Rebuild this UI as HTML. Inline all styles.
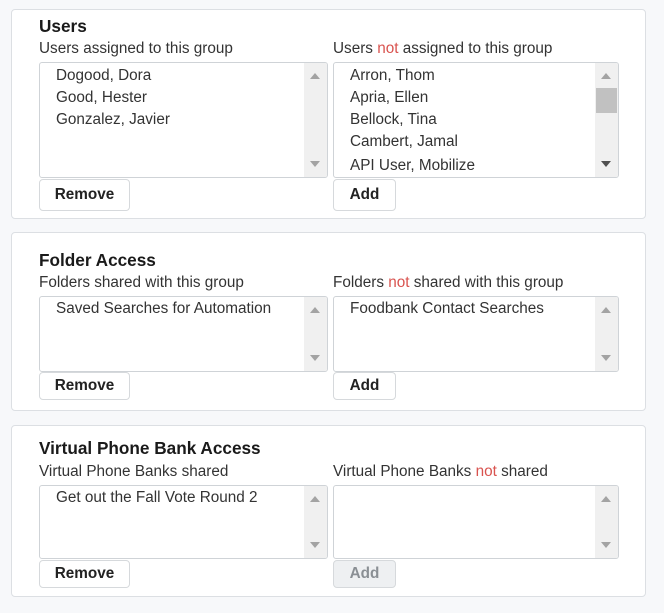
<!DOCTYPE html>
<html><head><style>
body{margin:0;width:664px;height:613px;background:#f7f8fa;font-family:"Liberation Sans",sans-serif;color:#212529;position:relative;overflow:hidden}
.card{position:absolute;left:11px;width:635px;background:#fff;border:1px solid #dcdfe3;border-radius:4px;box-sizing:border-box}
.a{position:absolute;white-space:nowrap}
h3{position:absolute;margin:0;font-size:17.2px;font-weight:bold;left:39px;color:#1a1a1a}
.lbl{position:absolute;font-size:15.3px;color:#333}
.not{color:#d9534f}
.list{position:absolute;border:1px solid #cfd3d7;border-radius:3px;background:#fff;box-sizing:border-box;overflow:hidden}
.list .it{position:absolute;left:16px;font-size:15.3px;color:#333;white-space:nowrap}
.sb{position:absolute;right:0;top:0;bottom:0;width:23px;background:#f0f0f0}
.up,.dn{position:absolute;left:6px;width:0;height:0;border-left:5px solid transparent;border-right:5px solid transparent}
.up{top:10px;border-bottom:6px solid #a3a3a3}
.dn{bottom:10px;border-top:6px solid #a3a3a3}
.btn{position:absolute;border:1px solid #d6d9dc;border-radius:4px;background:#fff;box-sizing:border-box;font-size:15.3px;font-weight:bold;color:#222;text-align:center}
.dis{background:#eef0f2;color:#8a8f94}
</style></head><body>

<div class="card" style="top:9px;height:210px"></div>
<h3 style="top:16px">Users</h3>
<div class="lbl a" style="left:39px;top:40px">Users assigned to this group</div>
<div class="lbl a" style="left:333px;top:40px">Users <span class="not">not</span> assigned to this group</div>
<div class="list" style="left:39px;top:62px;width:289px;height:116px">
<div class="it" style="top:4px">Dogood, Dora</div><div class="it" style="top:26px">Good, Hester</div><div class="it" style="top:48px">Gonzalez, Javier</div>
<div class="sb"><div class="up"></div><div class="dn"></div></div></div>
<div class="list" style="left:333px;top:62px;width:286px;height:116px">
<div class="it" style="top:4px">Arron, Thom</div><div class="it" style="top:26px">Apria, Ellen</div><div class="it" style="top:48px">Bellock, Tina</div><div class="it" style="top:70px">Cambert, Jamal</div><div class="it" style="top:94px">API User, Mobilize</div>
<div class="sb"><div class="up"></div><div style="position:absolute;left:1px;width:21px;top:25px;height:25px;background:#c1c1c1"></div><div class="dn" style="border-top-color:#505050"></div></div></div>
<div class="btn" style="left:39px;top:179px;width:91px;height:32px;line-height:30px">Remove</div>
<div class="btn" style="left:333px;top:179px;width:63px;height:32px;line-height:30px">Add</div>

<div class="card" style="top:232px;height:179px"></div>
<h3 style="top:250px">Folder Access</h3>
<div class="lbl a" style="left:39px;top:274px">Folders shared with this group</div>
<div class="lbl a" style="left:333px;top:274px">Folders <span class="not">not</span> shared with this group</div>
<div class="list" style="left:39px;top:296px;width:289px;height:76px">
<div class="it" style="top:3px">Saved Searches for Automation</div>
<div class="sb"><div class="up"></div><div class="dn"></div></div></div>
<div class="list" style="left:333px;top:296px;width:286px;height:76px">
<div class="it" style="top:3px">Foodbank Contact Searches</div>
<div class="sb"><div class="up"></div><div class="dn"></div></div></div>
<div class="btn" style="left:39px;top:372px;width:91px;height:28px;line-height:26px">Remove</div>
<div class="btn" style="left:333px;top:372px;width:63px;height:28px;line-height:26px">Add</div>

<div class="card" style="top:425px;height:172px"></div>
<h3 style="top:438px">Virtual Phone Bank Access</h3>
<div class="lbl a" style="left:39px;top:463px">Virtual Phone Banks shared</div>
<div class="lbl a" style="left:333px;top:463px">Virtual Phone Banks <span class="not">not</span> shared</div>
<div class="list" style="left:39px;top:485px;width:289px;height:74px">
<div class="it" style="top:3px">Get out the Fall Vote Round 2</div>
<div class="sb"><div class="up"></div><div class="dn"></div></div></div>
<div class="list" style="left:333px;top:485px;width:286px;height:74px">
<div class="sb"><div class="up"></div><div class="dn"></div></div></div>
<div class="btn" style="left:39px;top:560px;width:91px;height:28px;line-height:26px">Remove</div>
<div class="btn dis" style="left:333px;top:560px;width:63px;height:28px;line-height:26px">Add</div>
</body></html>
